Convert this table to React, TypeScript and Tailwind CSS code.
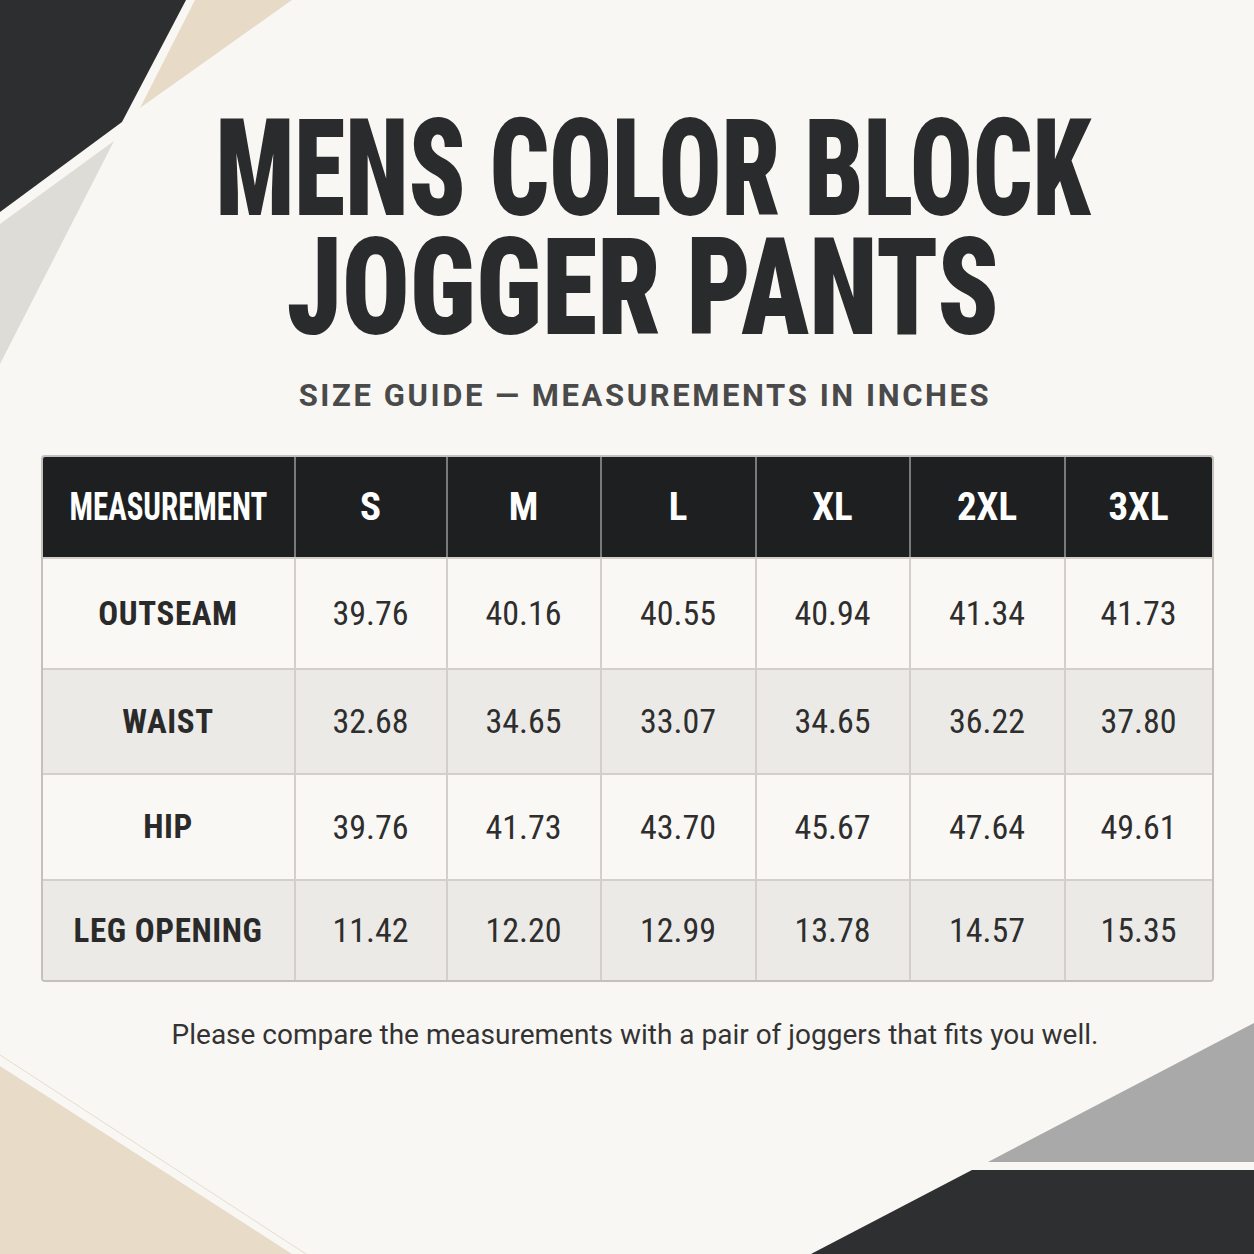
const sizes = ['S', 'M', 'L', 'XL', '2XL', '3XL'];

const rows = [
  { label: 'OUTSEAM', values: ['39.76', '40.16', '40.55', '40.94', '41.34', '41.73'], shade: false, h: 'h-[111px]' },
  { label: 'WAIST', values: ['32.68', '34.65', '33.07', '34.65', '36.22', '37.80'], shade: true, h: 'h-[105px]' },
  { label: 'HIP', values: ['39.76', '41.73', '43.70', '45.67', '47.64', '49.61'], shade: false, h: 'h-[106px]' },
  { label: 'LEG OPENING', values: ['11.42', '12.20', '12.99', '13.78', '14.57', '15.35'], shade: true, h: 'h-[101px]' },
];

const colWidths = ['w-[251px]', 'w-[152px]', 'w-[154px]', 'w-[155px]', 'w-[154px]', 'w-[155px]', 'w-[148px]'];

function Shapes() {
  return (
    <svg className="absolute inset-0" width="1254" height="1254" viewBox="0 0 1254 1254" aria-hidden>
      <polygon points="0,0 186,0 122,122 0,212" fill="#2d2e30" />
      <polygon points="195,0 292,0 140,108" fill="#e7dbc7" />
      <polygon points="0,224 114,141 0,364" fill="#dedcd7" />
      <line x1="0" y1="1055" x2="306" y2="1254" stroke="#e6dccb" strokeWidth="1" />
      <polygon points="0,1066 292,1254 0,1254" fill="#e8dcc8" />
      <polygon points="988,1162 1254,1023 1254,1162" fill="#a9a9a9" />
      <polygon points="972,1170 1254,1170 1254,1254 811,1254" fill="#2e2f31" />
    </svg>
  );
}

export default function App() {
  return (
    <div
      className="relative w-[1254px] h-[1254px] overflow-hidden bg-[#f9f7f3]"
      style={{ fontFamily: "Roboto, 'Liberation Sans', sans-serif" }}
    >
      <Shapes />
      <div className="relative flex flex-col items-center pt-[109px]">
        <h1 className="flex flex-col items-center text-[136px] leading-[119px] font-black font-stretch-condensed text-[#2a2b2d]">
          <span className="inline-block whitespace-nowrap scale-x-[0.765] translate-x-[26px]">MENS COLOR BLOCK</span>
          <span className="inline-block whitespace-nowrap scale-x-[0.825] translate-x-[16px]">JOGGER PANTS</span>
        </h1>

        <p className="mt-[29px] translate-x-[18px] text-[31px] leading-[40px] font-bold tracking-[2.6px] text-[#4a4a4a]">
          SIZE GUIDE — MEASUREMENTS IN INCHES
        </p>

        <div className="mt-[39px] rounded-[4px] border-2 border-[#c4c1bc] overflow-hidden">
          <div className="flex h-[100px] bg-[#1e1f21]">
            <div className={`${colWidths[0]} flex items-center justify-center`}>
              <span className="inline-block whitespace-nowrap scale-x-[0.815] text-[38px] font-bold font-stretch-condensed text-white">
                MEASUREMENT
              </span>
            </div>
            {sizes.map((s, i) => (
              <div
                key={s}
                className={`${colWidths[i + 1]} flex items-center justify-center border-l-2 border-[#7a7a7a]`}
              >
                <span className="text-[39px] font-bold font-stretch-condensed text-white">{s}</span>
              </div>
            ))}
          </div>
          {rows.map((row) => (
            <div
              key={row.label}
              className={`flex ${row.h} border-t-2 border-[#d3d0cb] ${row.shade ? 'bg-[#ebeae7]' : 'bg-[#faf8f5]'}`}
            >
              <div className={`${colWidths[0]} flex items-center justify-center`}>
                <span className="text-[33px] font-bold font-stretch-semi-condensed tracking-[0.6px] text-[#2a2a2a]">
                  {row.label}
                </span>
              </div>
              {row.values.map((v, i) => (
                <div
                  key={i}
                  className={`${colWidths[i + 1]} flex items-center justify-center border-l-2 border-[#d3d0cb]`}
                >
                  <span className="text-[34px] font-normal font-stretch-[79%] text-[#2e2e2e]">{v}</span>
                </div>
              ))}
            </div>
          ))}
        </div>

        <p className="mt-[34px] translate-x-[8px] text-[28px] leading-[38px] text-[#333333]">
          Please compare the measurements with a pair of joggers that fits you well.
        </p>
      </div>
    </div>
  );
}
